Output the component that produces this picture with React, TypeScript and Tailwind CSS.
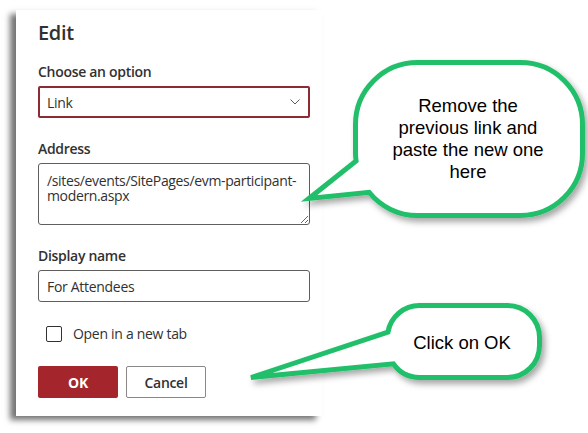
import React from "react";

export default function App() {
  return (
    <div className="relative w-[588px] h-[433px] bg-white overflow-hidden font-['Open_Sans',sans-serif] text-[#323130]">
      {/* Dialog panel */}
      <div className="ml-4 mt-[10px] w-[306px] h-[406px] bg-white shadow-[-6px_4px_6px_rgba(0,0,0,0.55)] pl-[22px] pr-[12px] pt-[9px] flex flex-col tracking-[-0.3px]">
        <div className="h-[28px] leading-[28px] text-[20px] font-semibold">Edit</div>

        <div className="mt-[15px] h-[20px] leading-[20px] text-[14px] font-semibold">Choose an option</div>
        <div className="mt-1 h-[32px] w-[272px] border-2 border-[#8c2a35] rounded-[2px] flex items-center justify-between pl-[7px] pr-[8px] text-[14px]">
          <span>Link</span>
          <svg width="10" height="6" viewBox="0 0 10 6" fill="none" className="text-[#605e5c]">
            <path d="M0.5 0.5 L5 5 L9.5 0.5" stroke="currentColor" strokeWidth="1" />
          </svg>
        </div>

        <div className="mt-[21px] h-[20px] leading-[20px] text-[14px] font-semibold">Address</div>
        <textarea
          readOnly
          defaultValue="/sites/events/SitePages/evm-participant-modern.aspx"
          className="mt-1 h-[62px] w-[272px] border border-[#605e5c] rounded-[3px] px-[8px] pt-[9px] text-[14px] leading-[15px] tracking-[-0.35px] text-[#323130] outline-none"
        />

        <div className="mt-[21px] h-[20px] leading-[20px] text-[14px] font-semibold">Display name</div>
        <div className="mt-1 h-[32px] w-[272px] border border-[#605e5c] rounded-[3px] flex items-center px-[8px] text-[14px]">
          For Attendees
        </div>

        <div className="mt-[22px] h-[20px] flex items-center pl-[8px]">
          <div className="w-[16px] h-[16px] border border-[#323130] rounded-[2px]" />
          <span className="ml-[11px] text-[14px] leading-[20px]">Open in a new tab</span>
        </div>

        <div className="mt-[22px] flex gap-2">
          <div className="w-[80px] h-[32px] rounded-[2px] bg-[#a4262c] text-white text-[14px] font-bold flex items-center justify-center">
            OK
          </div>
          <div className="w-[80px] h-[32px] rounded-[2px] border border-[#8a8886] bg-white text-[14px] font-semibold flex items-center justify-center">
            Cancel
          </div>
        </div>
      </div>

      {/* Callouts */}
      <svg className="absolute left-0 top-0" width="588" height="433" viewBox="0 0 588 433">
        <defs>
          <filter id="sh" x="-20%" y="-20%" width="140%" height="150%">
            <feDropShadow dx="3" dy="4" stdDeviation="3" floodColor="#000" floodOpacity="0.35" />
          </filter>
        </defs>
        <path
          d="M 417.5 62.5 H 520.5 A 62 62 0 0 1 582.5 124.5 V 153.5 A 62 62 0 0 1 520.5 215.5 H 417.5 A 62 62 0 0 1 369.1 192.3 L 309 198.5 L 356.1 161 A 62 62 0 0 1 355.5 153.5 V 124.5 A 62 62 0 0 1 417.5 62.5 Z"
          fill="#ffffff"
          stroke="#21bf6b"
          strokeWidth="5"
          strokeLinejoin="miter"
          filter="url(#sh)"
        />
        <path
          d="M 419.5 305.5 H 507.5 A 32 32 0 0 1 539.5 337.5 V 345.5 A 32 32 0 0 1 507.5 377.5 H 419.5 A 32 32 0 0 1 393.3 363.8 L 251 377.5 L 388 332 A 32 32 0 0 1 419.5 305.5 Z"
          fill="#ffffff"
          stroke="#21bf6b"
          strokeWidth="5"
          strokeLinejoin="miter"
          filter="url(#sh)"
        />
      </svg>

      <div className="absolute left-[378px] top-[95px] w-[180px] text-center font-['Liberation_Sans',Arial,sans-serif] text-[18.5px] leading-[22px] text-black">
        Remove the
        <br />
        previous link and
        <br />
        paste the new one
        <br />
        here
      </div>
      <div className="absolute left-[402px] top-[332px] w-[120px] text-center font-['Liberation_Sans',Arial,sans-serif] text-[18.5px] leading-[22px] text-black">
        Click on OK
      </div>
    </div>
  );
}
